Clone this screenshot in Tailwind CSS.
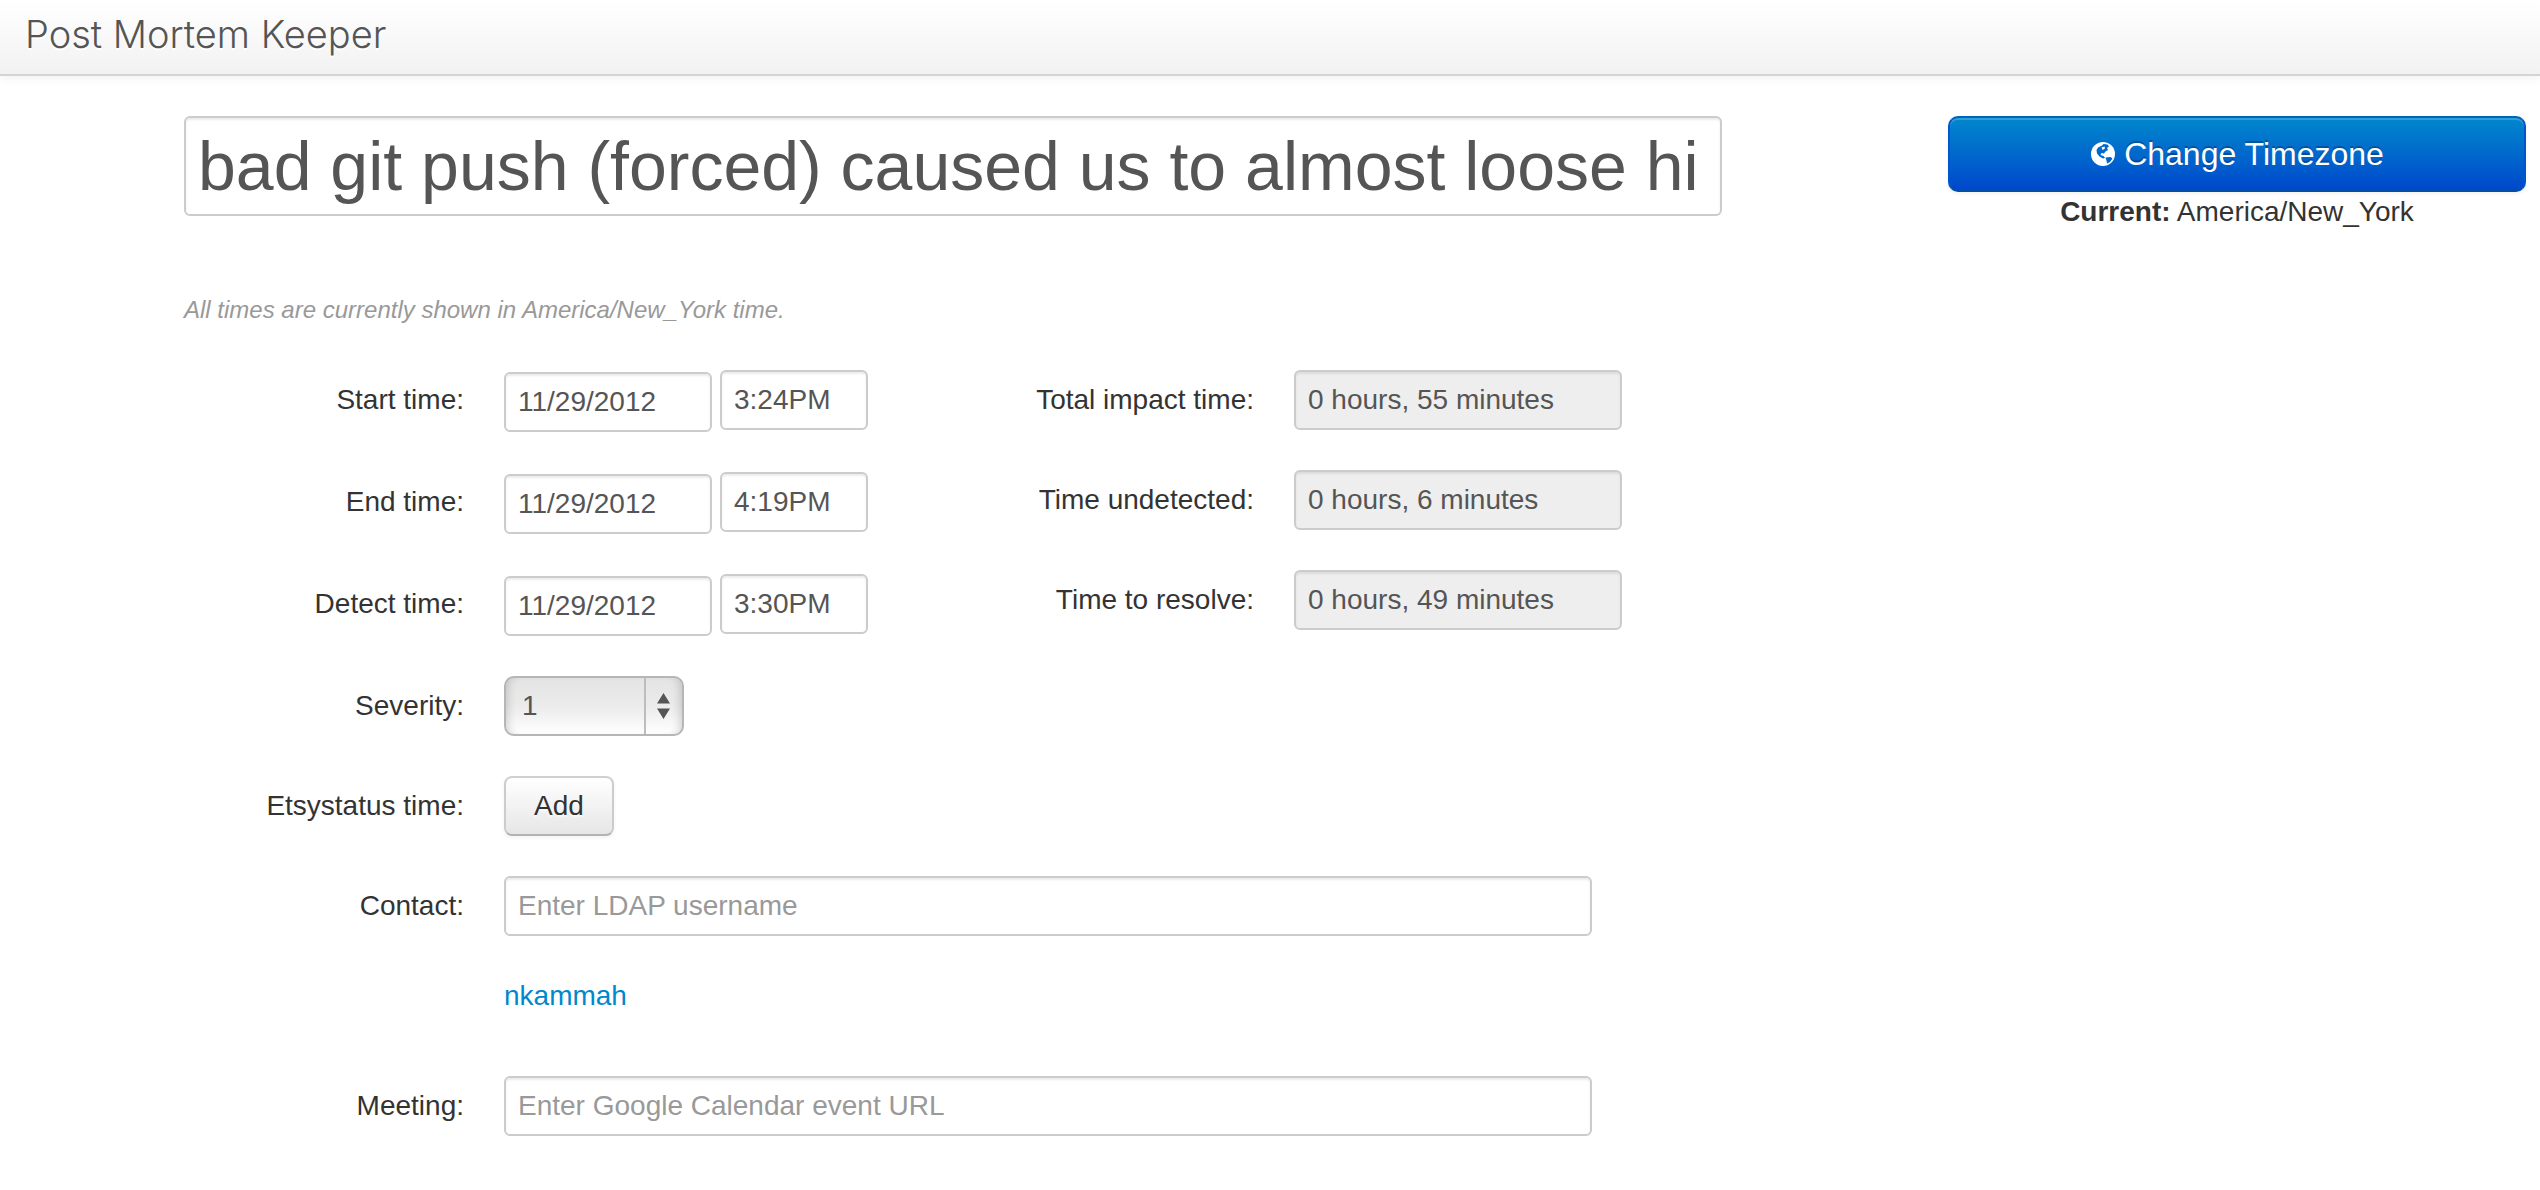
<!DOCTYPE html>
<html lang="en">
<head>
<meta charset="utf-8">
<title>Post Mortem Keeper</title>
<script src="https://cdn.jsdelivr.net/npm/@tailwindcss/browser@4"></script>
</head>
<body class="min-h-screen bg-white font-['Liberation_Sans',Arial,sans-serif] text-[28px] leading-10 text-[#333]">
<header class="flex h-[76px] items-start border-b-2 border-[#d4d4d4] bg-linear-to-b from-white to-[#f2f2f2] px-[25px] pt-3 shadow-[0_2px_10px_rgba(0,0,0,0.06)]">
  <a href="#" class="font-['Inter',sans-serif] text-[38px] leading-[44px] font-light text-[#555] [text-shadow:0_2px_0_#fff]">Post Mortem Keeper</a>
</header>

<main class="pt-10 pr-3.5 pb-14 pl-[184px]">
  <div class="flex items-start gap-[226px]">
    <input type="text" aria-label="Title" value="bad git push (forced) caused us to almost loose hi" class="h-[100px] min-w-0 flex-1 rounded-md border-2 border-[#ccc] px-3 text-[68px] leading-[80px] text-[#555] shadow-[inset_0_2px_2px_rgba(0,0,0,0.075)]">
    <div class="w-[578px] shrink-0 text-center">
      <button type="button" class="flex h-[76px] w-full items-center justify-center gap-2 rounded-[10px] border-2 border-x-[#0055cc] border-t-[#0064b8] border-b-[#0050a8] bg-linear-to-b from-[#0088cc] to-[#0044cc] bg-origin-border text-[32px] text-white shadow-[inset_0_2px_0_rgba(255,255,255,0.2),0_2px_4px_rgba(0,0,0,0.05)] [text-shadow:0_-2px_0_rgba(0,0,0,0.25)]">
        <svg class="size-[26px]" viewBox="0 0 26 26" aria-hidden="true">
          <circle cx="13" cy="13" r="12" fill="#fff"/>
          <path fill="#0069cc" d="M8 6.500L12 4.500L13.500 3L17.500 3.500L19 5.500L17 7L18 9L15.500 10.500L14 12.500L11.500 12L10.500 14L13.500 15L15 17L13 17.500L9.500 15.500L7 12.500L6.500 9Z"/>
          <path fill="#0062cc" d="M15.500 16.500L20.500 16L22.500 17.500L20 21L17 22.500L16.500 19.500Z"/>
          <path fill="#fff" d="M11.500 6.500L14.500 5.500L15 7.500L12.500 9Z"/>
        </svg>
        Change Timezone
      </button>
      <p><strong>Current:</strong> America/New_York</p>
    </div>
  </div>

  <p class="mt-[58px] text-2xl/10 text-[#999] italic">All times are currently shown in America/New_York time.</p>

  <form class="mt-10 flex flex-col gap-10">
    <div class="flex items-start">
      <div class="flex flex-col gap-10">
        <div class="flex h-[62px] items-start">
          <label for="start-date" class="mr-10 w-[280px] pt-2.5 text-right">Start time:</label>
          <input id="start-date" type="text" value="11/29/2012" class="mt-0.5 mr-2 h-[60px] w-[208px] rounded-md border-2 border-[#ccc] px-3 text-[#555] shadow-[inset_0_2px_2px_rgba(0,0,0,0.075)]">
          <input type="text" aria-label="Start clock time" value="3:24PM" class="h-[60px] w-[148px] rounded-md border-2 border-[#ccc] px-3 text-[#555] shadow-[inset_0_2px_2px_rgba(0,0,0,0.075)]">
        </div>
        <div class="flex h-[62px] items-start">
          <label for="end-date" class="mr-10 w-[280px] pt-2.5 text-right">End time:</label>
          <input id="end-date" type="text" value="11/29/2012" class="mt-0.5 mr-2 h-[60px] w-[208px] rounded-md border-2 border-[#ccc] px-3 text-[#555] shadow-[inset_0_2px_2px_rgba(0,0,0,0.075)]">
          <input type="text" aria-label="End clock time" value="4:19PM" class="h-[60px] w-[148px] rounded-md border-2 border-[#ccc] px-3 text-[#555] shadow-[inset_0_2px_2px_rgba(0,0,0,0.075)]">
        </div>
        <div class="flex h-[62px] items-start">
          <label for="detect-date" class="mr-10 w-[280px] pt-2.5 text-right">Detect time:</label>
          <input id="detect-date" type="text" value="11/29/2012" class="mt-0.5 mr-2 h-[60px] w-[208px] rounded-md border-2 border-[#ccc] px-3 text-[#555] shadow-[inset_0_2px_2px_rgba(0,0,0,0.075)]">
          <input type="text" aria-label="Detect clock time" value="3:30PM" class="h-[60px] w-[148px] rounded-md border-2 border-[#ccc] px-3 text-[#555] shadow-[inset_0_2px_2px_rgba(0,0,0,0.075)]">
        </div>
      </div>
      <div class="ml-[106px] flex flex-col gap-10">
        <div class="flex items-start gap-10">
          <label for="impact" class="w-[280px] pt-2.5 text-right">Total impact time:</label>
          <input id="impact" type="text" disabled value="0 hours, 55 minutes" class="h-[60px] w-[328px] rounded-md border-2 border-[#ccc] bg-[#eee] px-3 text-[#555] shadow-[inset_0_2px_2px_rgba(0,0,0,0.075)]">
        </div>
        <div class="flex items-start gap-10">
          <label for="undetected" class="w-[280px] pt-2.5 text-right">Time undetected:</label>
          <input id="undetected" type="text" disabled value="0 hours, 6 minutes" class="h-[60px] w-[328px] rounded-md border-2 border-[#ccc] bg-[#eee] px-3 text-[#555] shadow-[inset_0_2px_2px_rgba(0,0,0,0.075)]">
        </div>
        <div class="flex items-start gap-10">
          <label for="resolve" class="w-[280px] pt-2.5 text-right">Time to resolve:</label>
          <input id="resolve" type="text" disabled value="0 hours, 49 minutes" class="h-[60px] w-[328px] rounded-md border-2 border-[#ccc] bg-[#eee] px-3 text-[#555] shadow-[inset_0_2px_2px_rgba(0,0,0,0.075)]">
        </div>
      </div>
    </div>

    <div class="flex items-start gap-10">
      <label for="severity" class="w-[280px] pt-2.5 text-right">Severity:</label>
      <div class="relative">
        <select id="severity" class="block h-[60px] w-[180px] appearance-none rounded-[10px] border-2 border-[#b6b6b6] bg-linear-to-b from-[#e4e4e4] via-[#ebebeb] to-white px-4 text-[#555] shadow-[inset_8px_0_8px_-6px_rgba(0,0,0,0.16),inset_-8px_0_8px_-6px_rgba(0,0,0,0.16)]">
          <option>1</option>
          <option>2</option>
          <option>3</option>
          <option>4</option>
          <option>5</option>
        </select>
        <svg class="pointer-events-none absolute top-0.5 right-0 h-14 w-10" viewBox="0 0 40 56" aria-hidden="true">
          <path stroke="#bdbdbd" stroke-width="2" d="M1 0V56"/>
          <path fill="#555" d="M19.500 15L26 25.500H13ZM19.500 41L26 30.500H13Z"/>
        </svg>
      </div>
    </div>

    <div class="flex items-start gap-10">
      <label for="status-add" class="w-[280px] pt-2.5 text-right">Etsystatus time:</label>
      <button id="status-add" type="button" class="h-[60px] w-[110px] rounded-lg border-2 border-x-[#ccc] border-t-[#d0d0d0] border-b-[#b3b3b3] bg-linear-to-b from-white to-[#e6e6e6] shadow-[inset_0_2px_0_rgba(255,255,255,0.2),0_2px_4px_rgba(0,0,0,0.05)] [text-shadow:0_2px_2px_rgba(255,255,255,0.75)]">Add</button>
    </div>

    <div class="flex items-start gap-10">
      <label for="contact" class="w-[280px] pt-2.5 text-right">Contact:</label>
      <div class="flex max-w-[1088px] flex-1 flex-col items-start gap-10 pb-5">
        <input id="contact" type="text" placeholder="Enter LDAP username" class="h-[60px] w-full rounded-md border-2 border-[#ccc] px-3 text-[#555] shadow-[inset_0_2px_2px_rgba(0,0,0,0.075)] placeholder:text-[#999]">
        <a href="#" class="text-[#0088cc]">nkammah</a>
      </div>
    </div>

    <div class="flex items-start gap-10">
      <label for="meeting" class="w-[280px] pt-2.5 text-right">Meeting:</label>
      <input id="meeting" type="text" placeholder="Enter Google Calendar event URL" class="h-[60px] max-w-[1088px] flex-1 rounded-md border-2 border-[#ccc] px-3 text-[#555] shadow-[inset_0_2px_2px_rgba(0,0,0,0.075)] placeholder:text-[#999]">
    </div>
  </form>
</main>
</body>
</html>
